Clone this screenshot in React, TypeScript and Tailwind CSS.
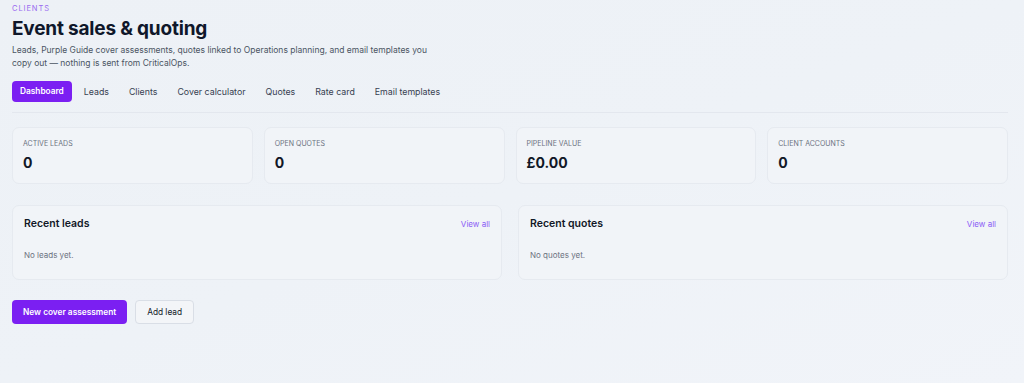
import React from "react";

const tabs = ["Dashboard", "Leads", "Clients", "Cover calculator", "Quotes", "Rate card", "Email templates"];
const stats = [
  { label: "ACTIVE LEADS", value: "0" },
  { label: "OPEN QUOTES", value: "0" },
  { label: "PIPELINE VALUE", value: "£0.00" },
  { label: "CLIENT ACCOUNTS", value: "0" },
];

export default function App() {
  return (
    <div
      className="min-h-[383px] w-full bg-gradient-to-br from-[#edf1f6] via-[#eef2f7] to-[#f1f4f9] text-[#111827]"
      style={{ fontFamily: "Inter, 'Noto Sans', sans-serif" }}
    >
      <div className="px-[12px] pt-[4px] pr-[16px]">
        <div className="text-[7.5px] tracking-[0.12em] text-[#9b6cf0] leading-[10px]">CLIENTS</div>
        <h1 className="mt-[3px] text-[19px] font-bold leading-[24px] tracking-[-0.01em] text-[#0f172a]">Event sales &amp; quoting</h1>
        <p className="mt-[3px] text-[8.5px] leading-[13px] text-[#4b5563] max-w-[425px]">
          Leads, Purple Guide cover assessments, quotes linked to Operations planning, and email templates you copy out — nothing is sent from CriticalOps.
        </p>
        <div className="mt-[11px] flex items-center gap-[4px] border-b border-[#e3e7ee] pb-[10px]">
          {tabs.map((t, i) => (
            <div
              key={t}
              className={
                i === 0
                  ? "rounded-[4px] bg-[#7b1ff2] px-[8px] h-[21px] flex items-center text-[8.3px] font-semibold text-white"
                  : "px-[8px] h-[21px] flex items-center text-[8.8px] text-[#374151]"
              }
            >
              {t}
            </div>
          ))}
        </div>
        <div className="mt-[14px] grid grid-cols-4 gap-[11px]">
          {stats.map((s) => (
            <div key={s.label} className="h-[57px] rounded-[7px] border border-[#e6eaf0] bg-[#f1f4f8] px-[10px] pt-[11px]">
              <div className="text-[7px] leading-[10px] text-[#6b7280]">{s.label}</div>
              <div className="mt-[5px] text-[14px] font-bold leading-[18px] text-[#111827]">{s.value}</div>
            </div>
          ))}
        </div>
        <div className="mt-[21px] grid grid-cols-2 gap-[16px]">
          {[
            { t: "Recent leads", e: "No leads yet." },
            { t: "Recent quotes", e: "No quotes yet." },
          ].map((p) => (
            <div key={p.t} className="h-[75px] rounded-[7px] border border-[#e6eaf0] bg-[#f1f4f8] px-[11px] pt-[11px]">
              <div className="flex items-center justify-between">
                <div className="text-[10.5px] font-semibold leading-[14px] text-[#111827]">{p.t}</div>
                <div className="text-[8px] text-[#8b5cf6]">View all</div>
              </div>
              <div className="mt-[19px] text-[8px] leading-[10px] text-[#6b7280]">{p.e}</div>
            </div>
          ))}
        </div>
        <div className="mt-[20px] flex gap-[8px]">
          <div className="h-[24px] rounded-[4px] bg-[#7b1ff2] px-[11px] flex items-center text-[8.3px] font-semibold text-white">New cover assessment</div>
          <div className="h-[24px] rounded-[4px] border border-[#d9dee6] bg-[#f3f5f8] px-[11px] flex items-center text-[8.3px] text-[#111827]">Add lead</div>
        </div>
      </div>
    </div>
  );
}
